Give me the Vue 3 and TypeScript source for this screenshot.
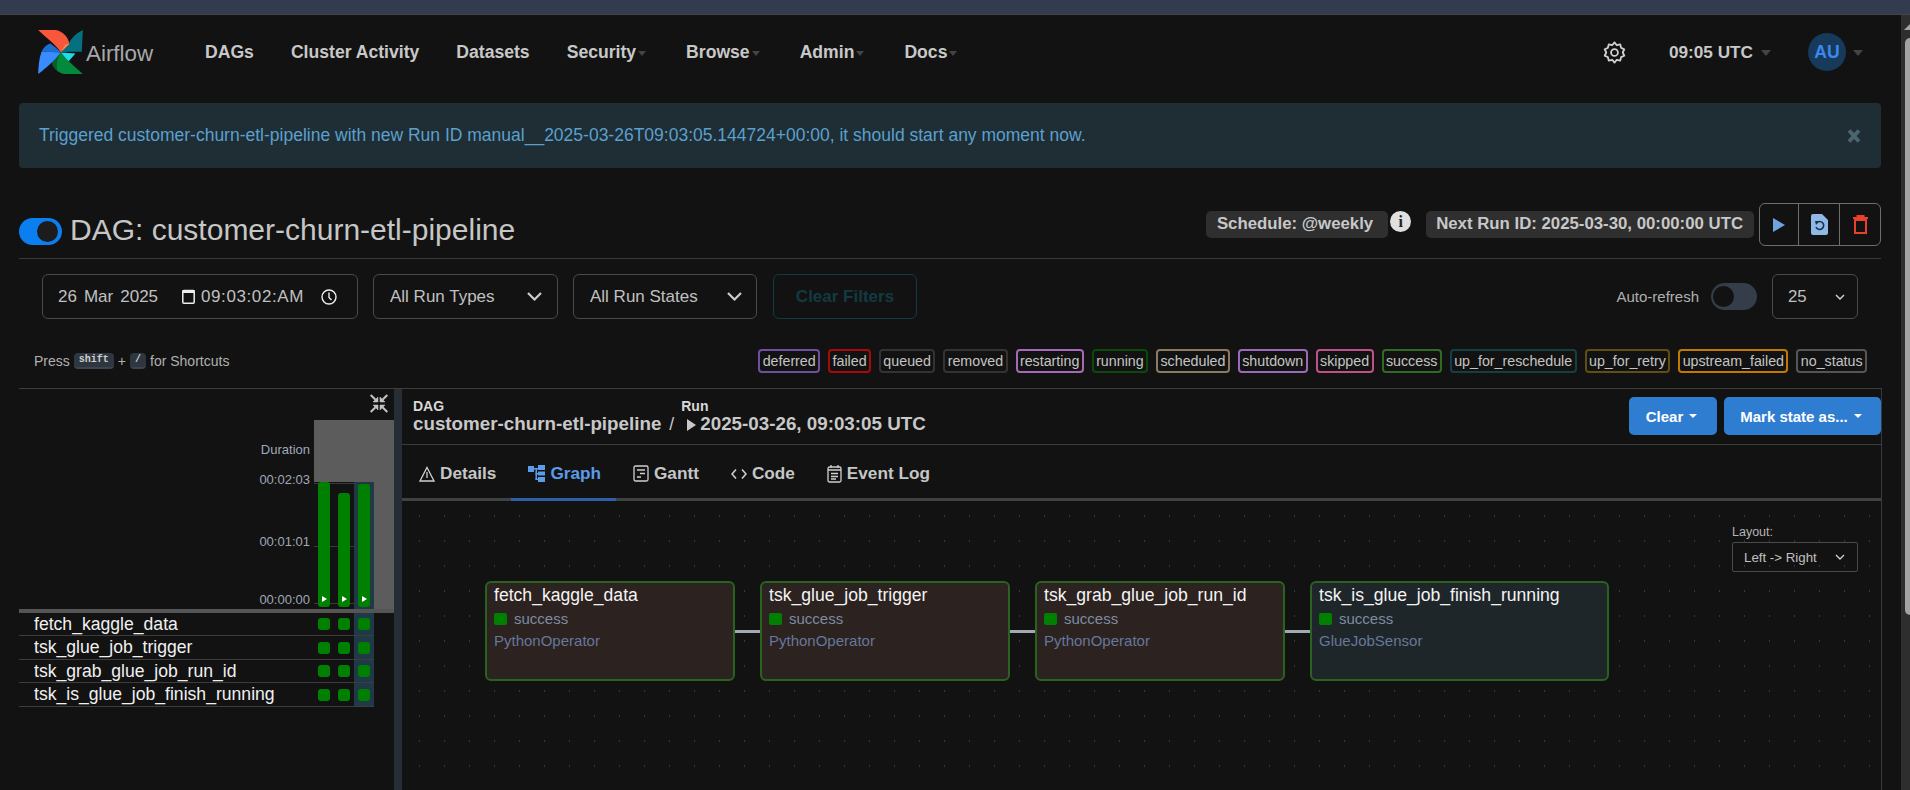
<script setup lang="ts">
const navMain = [
  { label: 'DAGs', caret: false },
  { label: 'Cluster Activity', caret: false },
  { label: 'Datasets', caret: false },
  { label: 'Security', caret: true },
  { label: 'Browse', caret: true },
  { label: 'Admin', caret: true },
  { label: 'Docs', caret: true },
]
const states = [
  ['deferred', '#6f4fa0'], ['failed', '#a80a0a'], ['queued', '#333333'], ['removed', '#333333'],
  ['restarting', '#a868b8'], ['running', '#0a4a0a'], ['scheduled', '#8b7a5f'], ['shutdown', '#9a6ab8'],
  ['skipped', '#c0508a'], ['success', '#2f6b22'], ['up_for_reschedule', '#153f40'], ['up_for_retry', '#5f4f10'],
  ['upstream_failed', '#c07a00'], ['no_status', '#555555'],
]
const rows = ['fetch_kaggle_data', 'tsk_glue_job_trigger', 'tsk_grab_glue_job_run_id', 'tsk_is_glue_job_finish_running']
const bars = [125, 114, 123]
const nodes = [
  { name: 'fetch_kaggle_data', op: 'PythonOperator', w: 250, cls: 'py' },
  { name: 'tsk_glue_job_trigger', op: 'PythonOperator', w: 250, cls: 'py' },
  { name: 'tsk_grab_glue_job_run_id', op: 'PythonOperator', w: 250, cls: 'py' },
  { name: 'tsk_is_glue_job_finish_running', op: 'GlueJobSensor', w: 299, cls: 'sensor' },
]
</script>

<template>
  <div class="page">
    <div class="topstrip"></div>
    <nav class="nav">
      <div class="brand">
        <svg class="logo" width="45" height="44" viewBox="115 85 133 131">
          <path d="M248 85 C226 96 210 112 205 130 L182 151 L213 150 H245 Z" fill="#05707f" />
          <path d="M115 85 H168 C190 90 206 108 208 127 L182 151 C170 130 140 110 115 85 Z" fill="#f9573b" />
          <path d="M208 127 L182 151 L196 128 Z" fill="#f08a5a" />
          <path d="M182 152 L226 155 L205 179 Z" fill="#17e0ec" />
          <path d="M248 216 H192 C170 210 153 192 155 168 L182 152 C200 175 225 195 248 216 Z" fill="#028a3c" />
          <path d="M182 152 L155 168 C153 185 160 198 172 206 C168 188 172 168 182 152 Z" fill="#0a5c28" />
          <path d="M115 216 C116 195 117 172 125 150 L182 151 C165 175 140 197 115 216 Z" fill="#3a8bff" />
          <path d="M125 150 C130 138 140 128 151 125 C162 132 172 141 182 151 Z" fill="#1c6ed0" />
        </svg>
        <span class="brandname">Airflow</span>
      </div>
      <ul class="menu">
        <li v-for="n in navMain" :key="n.label">{{ n.label }}<i v-if="n.caret" class="caret"></i></li>
      </ul>
      <div class="navright">
        <svg class="gear" width="23" height="23" viewBox="0 0 24 24" fill="none" stroke="#cfcfcf" stroke-width="1.9" stroke-linejoin="round">
          <path d="M12 1.5 L14.4 4.4 L18 3.6 L18.9 7.1 L22.2 8.6 L20.6 12 L22.2 15.4 L18.9 16.9 L18 20.4 L14.4 19.6 L12 22.5 L9.6 19.6 L6 20.4 L5.1 16.9 L1.8 15.4 L3.4 12 L1.8 8.6 L5.1 7.1 L6 3.6 L9.6 4.4 Z" />
          <circle cx="12" cy="12" r="3.6" />
        </svg>
        <span class="clock">09:05 UTC<i class="caret big"></i></span>
        <span class="avatar">AU</span><i class="caret big"></i>
      </div>
    </nav>

    <div class="alert">
      <span>Triggered customer-churn-etl-pipeline with new Run ID manual__2025-03-26T09:03:05.144724+00:00, it should start any moment now.</span>
      <svg width="14" height="14" viewBox="0 0 14 14" fill="none" stroke="#4a6470" stroke-width="4"><path d="M2 1.5 L12 12.5 M12 1.5 L2 12.5" /></svg>
    </div>

    <header class="dagheader">
      <div class="dagtitle">
        <span class="switch on"><i></i></span>
        <h1>DAG: customer-churn-etl-pipeline</h1>
      </div>
      <div class="dagmeta">
        <span class="pill">Schedule: @weekly</span>
        <span class="info">i</span>
        <span class="pill next">Next Run ID: 2025-03-30, 00:00:00 UTC</span>
        <div class="actions">
          <button><svg width="12" height="14" viewBox="0 0 12 14"><path d="M0 0 L12 7 L0 14 Z" fill="#6fa3dc" /></svg></button>
          <button>
            <svg width="17" height="21" viewBox="0 0 17 21"><path d="M2 0 H11 L17 6 V19 Q17 21 15 21 H2 Q0 21 0 19 V2 Q0 0 2 0 Z" fill="#8fb8e6" /><path d="M5.5 9 A4 4 0 1 1 5 13" fill="none" stroke="#17324f" stroke-width="1.6" /><path d="M4 7 H8.5 L5 11 Z" fill="#17324f" /></svg>
          </button>
          <button>
            <svg width="15" height="19" viewBox="0 0 15 19" fill="none" stroke="#e8402a" stroke-width="2"><path d="M0 3 H15 M4.5 3 V1 H10.5 V3" /><rect x="2" y="5" width="11" height="13" /></svg>
          </button>
        </div>
      </div>
    </header>

    <section class="filters">
      <div class="datefield">
        <span class="date">26 Mar 2025</span>
        <svg class="cal" width="13" height="15" viewBox="0 0 13 15" fill="none" stroke="#eee" stroke-width="1.5"><rect x="0.8" y="1.5" width="11.4" height="12.7" rx="1" /><path d="M0.5 2.5 H12.5" stroke-width="3" /></svg>
        <span class="time">09:03:02:AM</span>
        <svg width="16" height="16" viewBox="0 0 16 16" fill="none" stroke="#eee" stroke-width="1.4"><circle cx="8" cy="8" r="7" /><path d="M8 3.5 V8.5 L10.5 11" /></svg>
      </div>
      <div class="selectbox s1">All Run Types<svg width="15" height="9" viewBox="0 0 15 9" fill="none" stroke="#ccc" stroke-width="2.2"><path d="M1 1 L7.5 7.5 L14 1" /></svg></div>
      <div class="selectbox s2">All Run States<svg width="15" height="9" viewBox="0 0 15 9" fill="none" stroke="#ccc" stroke-width="2.2"><path d="M1 1 L7.5 7.5 L14 1" /></svg></div>
      <button class="clearfilters">Clear Filters</button>
      <div class="autorefresh">
        <span>Auto-refresh</span>
        <span class="switch off"><i></i></span>
        <div class="selectbox count">25<svg width="10" height="6" viewBox="0 0 10 6" fill="none" stroke="#ccc" stroke-width="1.5"><path d="M1 1 L5 5 L9 1" /></svg></div>
      </div>
    </section>

    <section class="legendrow">
      <div class="shortcuts"><span>Press</span><kbd>shift</kbd><span>+</span><kbd>/</kbd><span>for Shortcuts</span></div>
      <div class="legend">
        <span v-for="s in states" :key="s[0]" class="state" :style="{ borderColor: s[1] }">{{ s[0] }}</span>
      </div>
    </section>

    <main class="workspace">
      <aside class="gridside">
        <div class="collapse">
          <svg width="18" height="19" viewBox="0 0 18 19" fill="#c4c4c4" stroke="#c4c4c4">
            <path d="M8 3 V8 H3 Z" stroke-width="0.5" /><path d="M0.7 1 L5.5 5.7" stroke-width="2" fill="none" />
            <path d="M10 3 V8 H15 Z" stroke-width="0.5" /><path d="M17.3 1 L12.5 5.7" stroke-width="2" fill="none" />
            <path d="M8 16 V11 H3 Z" stroke-width="0.5" /><path d="M0.7 18 L5.5 13.3" stroke-width="2" fill="none" />
            <path d="M10 16 V11 H15 Z" stroke-width="0.5" /><path d="M17.3 18 L12.5 13.3" stroke-width="2" fill="none" />
          </svg>
        </div>
        <div class="chart">
          <div class="axis">
            <span class="durlabel">Duration</span>
            <span class="t1">00:02:03</span>
            <span class="t2">00:01:01</span>
            <span class="t3">00:00:00</span>
          </div>
          <div class="plot">
            <div class="greyzone"></div>
            <div class="barsarea">
              <div v-for="(h, i) in bars" :key="i" class="barcol" :class="{ sel: i === 2 }">
                <div class="bar" :style="{ height: h + 'px' }"><svg width="5" height="6" viewBox="0 0 5 6"><path d="M0 0 L5 3 L0 6 Z" fill="#fff" /></svg></div>
              </div>
              <div class="tick top"></div>
              <div class="tick mid"></div>
              <div class="tick low"></div>
            </div>
          </div>
        </div>
        <div class="gridbar"></div>
        <div class="taskrows">
          <div v-for="r in rows" :key="r" class="taskrow">
            <span class="taskname">{{ r }}</span>
            <div class="cells">
              <div class="cell"><i></i></div>
              <div class="cell"><i></i></div>
              <div class="cell sel"><i></i></div>
            </div>
          </div>
        </div>
      </aside>

      <div class="divider"></div>

      <section class="detail">
        <div class="crumbs">
          <div class="crumb">
            <small>DAG</small>
            <strong>customer-churn-etl-pipeline</strong>
          </div>
          <span class="slash">/</span>
          <div class="crumb run">
            <small>Run</small>
            <strong><svg width="9" height="12" viewBox="0 0 9 12"><path d="M0 0 L9 6 L0 12 Z" fill="#c8c8c8" /></svg>2025-03-26, 09:03:05 UTC</strong>
          </div>
          <div class="crumbbtns">
            <button class="blue">Clear<i class="wcaret"></i></button>
            <button class="blue wide">Mark state as...<i class="wcaret"></i></button>
          </div>
        </div>

        <div class="tabs">
          <div class="tab">
            <svg width="16" height="16" viewBox="0 0 16 16" fill="none" stroke="#cfcfcf" stroke-width="1.3"><path d="M8 1.5 L15 15 H1 Z" /><path d="M8 6 V12" /></svg>Details
          </div>
          <div class="tab active">
            <svg width="17" height="17" viewBox="0 0 17 17" fill="#5b9be8"><rect x="0" y="1" width="6" height="6" /><rect x="10" y="0" width="7" height="5" /><rect x="10" y="6.5" width="7" height="4" /><rect x="10" y="12" width="7" height="5" /><rect x="6" y="3" width="4" height="1.5" /><rect x="7.5" y="3" width="1.5" height="12" /><rect x="7.5" y="8" width="3" height="1.5" /><rect x="7.5" y="13.5" width="3" height="1.5" /></svg>Graph
          </div>
          <div class="tab">
            <svg width="16" height="17" viewBox="0 0 16 17" fill="none" stroke="#cfcfcf" stroke-width="1.3"><rect x="1" y="1" width="14" height="15" rx="1.5" /><path d="M4 5 H12 M7 8.5 H12 M4 12 H8" /></svg>Gantt
          </div>
          <div class="tab">
            <svg width="16" height="14" viewBox="0 0 16 14" fill="none" stroke="#cfcfcf" stroke-width="1.6"><path d="M5 2.5 L1 7 L5 11.5 M11 2.5 L15 7 L11 11.5" /></svg>Code
          </div>
          <div class="tab">
            <svg width="15" height="19" viewBox="0 0 15 19" fill="none" stroke="#cfcfcf" stroke-width="1.3"><rect x="1" y="3" width="13" height="15" rx="1.5" /><path d="M4 1 V4 M11 1 V4 M1 6 H14 M4 9.5 H11 M4 12.5 H11 M4 15 H9" /></svg>Event Log
          </div>
        </div>

        <div class="canvas">
          <div class="layoutctl">
            <label>Layout:</label>
            <div class="selectbox layoutsel">Left -&gt; Right<svg width="10" height="6" viewBox="0 0 10 6" fill="none" stroke="#ccc" stroke-width="1.4"><path d="M1 1 L5 5 L9 1" /></svg></div>
          </div>
          <div class="flow">
            <template v-for="(n, i) in nodes" :key="n.name">
              <div v-if="i > 0" class="edge"></div>
              <div class="node" :class="n.cls" :style="{ width: n.w + 'px' }">
                <div class="nodename">{{ n.name }}</div>
                <div class="nodestate"><i></i>success</div>
                <div class="nodeop">{{ n.op }}</div>
              </div>
            </template>
          </div>
        </div>
      </section>
    </main>
    <div class="scrolltrack"><div class="scrollup"></div><div class="scrollthumb"></div></div>
  </div>
</template>

<style>
html, body { margin: 0; padding: 0; background: #121212; overflow: hidden; }
</style>

<style scoped>
.page {
  position: relative;
  width: 1910px;
  height: 790px;
  overflow: hidden;
  background: #121212;
  color: #cfcfcf;
  font-family: "Liberation Sans", Arial, sans-serif;
  box-sizing: border-box;
  padding-right: 29px;
}
.topstrip { height: 15px; margin-right: -29px; background: #323c4e; border-bottom: 1px solid #444; box-sizing: border-box; }
.nav { display: flex; align-items: center; height: 74px; margin-bottom: 14px; padding-left: 38px; }
.brand { display: flex; align-items: center; width: 167px; flex: none; }
.brandname { font-size: 22.4px; color: #a8a8a8; margin-left: 3px; margin-top: 4px; }
.menu { display: flex; list-style: none; margin: 0; padding: 0; gap: 37px; font-size: 17.6px; font-weight: 700; color: #c8c8c8; }
.menu li { display: flex; align-items: center; white-space: nowrap; }
.menu li:nth-child(n+5) { margin-left: 3px; }
.caret { display: inline-block; width: 0; height: 0; margin-left: 2px; margin-top: 2px; border-left: 4.5px solid transparent; border-right: 4.5px solid transparent; border-top: 5px solid #444; }
.caret.big { border-left-width: 5px; border-right-width: 5px; border-top-width: 6px; }
.navright { margin-left: auto; display: flex; align-items: center; font-weight: 700; font-size: 17.2px; color: #c8c8c8; padding-right: 18px; }
.gear { margin-right: 43px; }
.clock { display: flex; align-items: center; margin-right: 37px; white-space: nowrap; }
.clock .caret { margin-left: 8px; }
.avatar { width: 38px; height: 38px; border-radius: 50%; background: #17395a; color: #3b88f0; display: flex; align-items: center; justify-content: center; font-size: 17.6px; }
.navright > .caret { margin-left: 7px; }
.alert { margin-left: 19px; height: 65px; box-sizing: border-box; background: #1f2d34; color: #5ba0cf; font-size: 17.5px; border-radius: 4px; display: flex; align-items: center; justify-content: space-between; padding: 0 20px; }
.dagheader { margin-left: 19px; height: 91px; box-sizing: border-box; padding-top: 35px; border-bottom: 1px solid #3a3a3a; display: flex; justify-content: space-between; align-items: flex-start; }
.dagtitle { display: flex; align-items: flex-start; gap: 8px; padding-top: 15px; }
.dagtitle h1 { margin: -2px 0 0; font-weight: 400; font-size: 30px; line-height: 27px; color: #c6c6c6; white-space: nowrap; }
.switch { display: inline-block; position: relative; flex: none; border-radius: 14px; box-sizing: border-box; }
.switch i { position: absolute; border-radius: 50%; }
.switch.on { background: #0b7ef0; width: 43px; height: 27px; }
.switch.on i { right: 4px; top: 3px; width: 21px; height: 21px; background: #1c1c1c; }
.switch.off { background: #343d49; width: 46px; height: 27px; }
.switch.off i { left: 2px; top: 3px; width: 21px; height: 21px; background: #121212; }
.dagmeta { display: flex; align-items: flex-start; font-size: 16.8px; font-weight: 700; color: #c8c8c8; }
.pill { background: #2f2f2f; border-radius: 5px; height: 27px; line-height: 25px; padding: 0 15px 0 11px; white-space: nowrap; margin-top: 8px; box-sizing: border-box; }
.pill.next { padding: 0 11px 0 10px; }
.info { width: 21px; height: 21px; border-radius: 50%; background: #e0e0e0; color: #222; font-size: 16px; font-weight: 700; font-family: "Liberation Serif", serif; margin: 8px 15px 0 2px; display: flex; align-items: center; justify-content: center; }
.actions { display: flex; margin-left: 5px; height: 43px; border: 1px solid #6e6e6e; border-radius: 6px; box-sizing: border-box; }
.actions button { background: none; border: none; border-left: 1px solid #6e6e6e; width: 41px; padding: 0; display: flex; align-items: center; justify-content: center; }
.actions button:first-child { border-left: none; width: 38px; }
.filters { display: flex; align-items: center; height: 45px; margin-top: 15px; padding-left: 42px; font-size: 17px; }
.datefield { width: 316px; height: 45px; flex: none; box-sizing: border-box; border: 1px solid #4a4a4a; border-radius: 6px; display: flex; align-items: center; padding-left: 15px; color: #c0c0c0; margin-right: 15px; white-space: nowrap; }
.date { word-spacing: 2.3px; width: 100px; margin-right: 24px; }
.cal { flex: none; }
.time { margin: 0 17px 0 6px; letter-spacing: 0.6px; width: 103px; }
.selectbox { display: flex; align-items: center; justify-content: space-between; border: 1px solid #4a4a4a; border-radius: 6px; box-sizing: border-box; color: #c0c0c0; white-space: nowrap; flex: none; }
.s1 { width: 185px; height: 45px; padding: 0 15px 0 16px; margin-right: 15px; }
.s2 { width: 184px; height: 45px; padding: 0 14px 0 16px; margin-right: 16px; }
.clearfilters { width: 144px; height: 45px; background: none; border: 1px solid #123a42; border-radius: 6px; color: #123a42; font-weight: 700; font-size: 17px; font-family: inherit; padding: 0; }
.autorefresh { margin-left: auto; display: flex; align-items: center; font-size: 15px; color: #b0b0b0; padding-right: 23px; }
.autorefresh > span:first-child { margin-right: 12px; }
.count { width: 86px; height: 45px; margin-left: 15px; padding: 0 12px 0 15px; font-size: 16.8px; }
.legendrow { display: flex; justify-content: space-between; align-items: center; height: 24px; margin-top: 30px; padding-left: 34px; padding-right: 14px; }
.shortcuts { font-size: 14px; color: #b0b0b0; display: flex; align-items: center; gap: 4px; white-space: nowrap; }
kbd { font-family: "Liberation Mono", monospace; font-size: 10px; line-height: 14px; background: #2e3640; color: #cfcfcf; padding: 0 5px; border-radius: 4px; border-bottom: 2px solid #3e4550; font-weight: 700; }
.legend { display: flex; gap: 8px; }
.state { font-size: 14.25px; color: #c4c4c4; border: 2px solid; border-radius: 4px; padding: 0 2.4px; height: 24px; line-height: 20px; box-sizing: border-box; white-space: nowrap; }
.workspace { display: flex; margin: 15px -1px 0 19px; height: 402px; box-sizing: border-box; border-top: 1px solid #3d3d3d; }
.gridside { width: 375px; flex: none; position: relative; }
.collapse { position: absolute; top: 5px; left: 351px; }
.chart { height: 220px; display: flex; }
.axis { width: 295px; position: relative; font-size: 13px; line-height: 15px; color: #9fa8b8; }
.axis span { position: absolute; right: 4px; white-space: nowrap; }
.durlabel { top: 53px; }
.t1 { top: 83px; }
.t2 { top: 145px; }
.t3 { top: 203px; }
.plot { width: 80px; position: relative; }
.greyzone { position: absolute; left: 0; top: 31px; width: 80px; height: 193px; background: #5c5c5c; }
.barsarea { position: absolute; left: 0; top: 93px; width: 60px; height: 127px; background: #121212; display: flex; }
.tick { position: absolute; left: 0; right: 0; height: 1px; background: #3a3a3a; z-index: 0; }
.tick.top { top: 1px; }
.tick.mid { top: 64px; }
.tick.low { top: 121px; }
.barcol { width: 20px; display: flex; align-items: flex-end; justify-content: center; padding-bottom: 2px; box-sizing: border-box; position: relative; z-index: 1; }
.barcol.sel { background: #1f3946; }
.bar { width: 12px; background: #008000; border-radius: 3px; display: flex; align-items: flex-end; justify-content: center; padding-bottom: 5px; box-sizing: border-box; }
.gridbar { height: 4px; background: #555; position: relative; }
.taskrows { width: 355px; }
.taskrow { display: flex; height: 23px; box-sizing: border-box; border-bottom: 1px solid #3d3d3d; align-items: center; justify-content: space-between; }
.taskrow:nth-child(even) { height: 24px; }
.taskname { font-size: 17.6px; color: #f0f0f0; padding-left: 15px; white-space: nowrap; }
.cells { display: flex; height: 100%; }
.cell { width: 20px; display: flex; align-items: center; justify-content: center; }
.cell.sel { background: #1f3946; }
.cell i { width: 12px; height: 12px; border-radius: 3px; background: #008000; display: block; }
.divider { width: 8px; flex: none; background: #272d35; }
.detail { flex: 1; min-width: 0; border-right: 1px solid #3a3a3a; }
.crumbs { display: flex; align-items: flex-start; height: 56px; box-sizing: border-box; border-bottom: 1px solid #3d3d3d; padding: 8px 0 0 11px; }
.crumb { display: flex; flex-direction: column; margin-top: 2px; }
.crumb small { font-size: 14px; font-weight: 700; line-height: 15px; color: #d8d8d8; }
.crumb strong { font-size: 18.8px; line-height: 20px; color: #c8c8c8; white-space: nowrap; display: flex; align-items: center; gap: 4px; }
.crumb strong svg { margin-left: 6px; margin-top: 2px; }
.slash { font-size: 17.6px; margin: 17px 0 0 8px; color: #ccc; }
.crumb.run { margin-left: 7px; }
.crumbbtns { margin-left: auto; display: flex; gap: 7px; }
.blue { height: 38px; background: #2f7dd1; border: none; border-radius: 5px; color: #fff; font-weight: 700; font-size: 15px; font-family: inherit; width: 88px; padding: 0 3px 0 0; display: flex; align-items: center; justify-content: center; gap: 6px; }
.blue.wide { width: 157px; }
.wcaret { width: 0; height: 0; border-left: 4px solid transparent; border-right: 4px solid transparent; border-top: 4px solid #fff; }
.tabs { display: flex; height: 53px; border-bottom: 3px solid #3f4145; }
.tab { display: flex; align-items: center; gap: 5px; padding: 4px 15px 0 17px; font-size: 17.2px; font-weight: 700; color: #c6c6c6; height: 56px; box-sizing: border-box; border-bottom: 3px solid transparent; position: relative; }
.tab.active { color: #5b9be8; border-bottom-color: #2f5fa8; }
.canvas {
  position: relative;
  height: 289px;
  background-image: radial-gradient(circle, #5a5a5a 0.6px, transparent 1px);
  background-size: 25px 25px;
  background-position: 5px 2.5px;
  overflow: hidden;
}
.layoutctl { position: absolute; right: 23px; top: 24px; display: flex; flex-direction: column; font-size: 12.5px; color: #b5b5b5; gap: 2px; }
.layoutctl label { line-height: 15px; }
.layoutsel { width: 126px; height: 30px; padding: 0 12px 0 11px; border-radius: 2px; font-size: 13.3px; }
.flow { display: flex; align-items: center; padding: 80px 0 0 83px; }
.edge { width: 25px; height: 3px; background: #a3a9b3; }
.node { height: 100px; box-sizing: border-box; border: 2px solid #2a6220; border-radius: 6px; padding: 1px 7px; }
.node.py { background: #2c2220; }
.node.sensor { background: #1f262a; }
.nodename { font-size: 17.6px; color: #f4f4f4; line-height: 23px; white-space: nowrap; }
.nodestate { display: flex; align-items: center; gap: 7px; font-size: 15px; color: #7e8ba0; margin-top: 2px; line-height: 20px; }
.nodestate i { width: 13px; height: 12px; border-radius: 2px; background: #008000; display: block; }
.nodeop { font-size: 15px; color: #65789a; margin-top: 2px; line-height: 20px; }
.scrolltrack { position: absolute; right: 0; top: 15px; bottom: 0; width: 9px; background: #2e2e2e; }
.scrollthumb { position: absolute; top: 23px; left: 4px; right: 0; height: 577px; background: #a3a3a3; border-radius: 5px 0 0 5px; }
.scrollup { position: absolute; top: 9px; left: 3px; width: 0; height: 0; border-left: 6px solid transparent; border-right: 0 solid transparent; border-bottom: 6px solid #a3a3a3; }
</style>
